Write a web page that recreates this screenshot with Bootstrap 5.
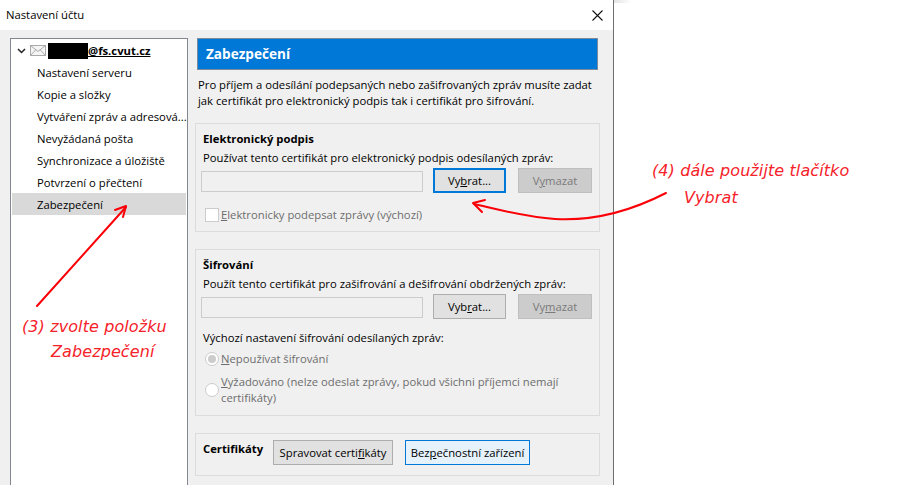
<!DOCTYPE html>
<html lang="cs"><head><meta charset="utf-8"><title>Nastavení účtu</title>
<link href="https://cdn.jsdelivr.net/npm/bootstrap@5.3.0/dist/css/bootstrap.min.css" rel="stylesheet">
<style>
html,body{height:485px;overflow:hidden;background:#fff}
body{font-family:"Open Sans","Noto Sans",sans-serif;font-size:11.27px;line-height:16px;color:#000;position:relative}
.win{width:614px;height:485px;border-right:1px solid #6f6f6f}
.tbar{height:30px;padding-left:6px;padding-right:10px}
.closex{width:11px;height:11px}
.wbody{background:#f0f0f0;flex:1;padding:8px 0 0 10px;min-height:0}
.tree{width:178px;flex:none;background:#fff;border:1px solid #828790;border-bottom:0;padding:1px;}
.acct{height:21px;padding-left:5px;margin-bottom:0}
.redact{width:40px;height:16px;background:#000;margin-left:2px}
.addr{font-weight:700;text-decoration:underline;font-size:11.3px}
.titem{height:22px;padding-left:25px;padding-top:2px;white-space:nowrap}
.titem.sel{background:#d9d9d9}
.main{margin-left:7px;width:405px;flex:none;min-width:0}
.hdr{margin:0 2px;height:32px;background:#0078d7;border:1px solid #7c8a99;color:#fff;font-weight:700;font-size:13.6px;padding-left:8px}
.intro{margin:7px 3px 0 3px;height:46px}
.grp{border:1px solid #dcdcdc;padding:7px 7px 0 7px;margin-bottom:17px}
.g1{height:109px}.g2{height:167px}.g3{height:43px;padding:6px 7px 0 7px;margin-bottom:0}
.gt{font-weight:700;height:16px;margin-bottom:3px}
.gt3{width:57px;padding-top:1px}
.fldrow{margin-top:2px;margin-left:-2px;height:25px}
.fld{width:222px;height:21px;background:#f0f0f0;border:1px solid #ccc;flex:none;margin-top:3px}
.wbtn{--bs-btn-padding-x:0;--bs-btn-padding-y:0;--bs-btn-font-size:11.27px;--bs-btn-line-height:1;--bs-btn-border-radius:0;height:25px;flex:none;background:#e1e1e1;border:1px solid #adadad;color:#000;font-family:inherit;opacity:1}
.b1{width:73px;margin-left:10px}
.b2{width:74px;margin-left:12px}
.b1.foc{border:2px solid #0078d7}
.b2{background:#ccc;border-color:#bfbfbf;color:#7a7a7a}
.bmgr{width:120px;margin-left:13px}
.bsec{width:125px;margin-left:12px;background:#e5f1fb;border-color:#0078d7}
.off{color:#6d6d6d}
.ck{width:14px;height:14px;background:#fff;border:1px solid #ccc;flex:none;margin-right:2px}
.rd{width:14px;height:14px;background:#fff;border:1px solid #ccc;border-radius:50%;flex:none;margin-right:2px}
.rd.on{background:#fff;position:relative}
.rd.on::after{content:"";position:absolute;left:2px;top:2px;width:8px;height:8px;border-radius:50%;background:#ccc}
.ckrow{margin-top:14px;margin-left:2px;height:16px}
.sub{margin-top:11px;height:16px}
.rrow{margin-top:5px;margin-left:2px;height:16px}
.rrow2{margin-top:7px;margin-left:2px}
.ann{position:absolute;color:#f5222a;font-family:"DejaVu Sans",sans-serif;font-style:italic;font-size:16px;line-height:20px;white-space:nowrap;letter-spacing:.1px}
.a4a{left:652px;top:161px}.a4b{left:684px;top:188px}.a3a{left:22px;top:317px}.a3b{left:51px;top:342px}
.over{position:absolute;left:0;top:0;width:900px;height:485px;pointer-events:none}
.shade{position:absolute;left:614px;top:0;width:18px;height:3px;background:linear-gradient(90deg,#e4e4e4,#fff)}
</style></head><body>
<div class="win d-flex flex-column">
  <div class="tbar d-flex align-items-center justify-content-between"><span>Nastavení účtu</span>
    <svg class="closex" viewBox="0 0 11 11"><path d="M.5.5l10 10M10.5.5l-10 10" stroke="#111" stroke-width="1.1" fill="none"/></svg></div>
  <div class="wbody d-flex">
    <div class="tree">
      <div class="acct d-flex align-items-center">
        <svg width="9" height="6" viewBox="0 0 9 6"><path d="M1 1l3.5 3.5L8 1" stroke="#222" stroke-width="1.5" fill="none"/></svg>
        <svg class="ms-1" width="16" height="11" viewBox="0 0 16 11"><rect x=".5" y=".5" width="15" height="10" fill="#f5f5f5" stroke="#aaa"/><path d="M.5.5l7.5 6 7.5-6M.5 10.5l5.5-6M15.5 10.5l-5.5-6" stroke="#aaa" fill="none"/></svg>
        <span class="redact"></span><span class="addr">@fs.cvut.cz</span>
      </div>
      <div class="titem d-flex align-items-center">Nastavení serveru</div>
      <div class="titem d-flex align-items-center">Kopie a složky</div>
      <div class="titem d-flex align-items-center">Vytváření zpráv a adresová...</div>
      <div class="titem d-flex align-items-center">Nevyžádaná pošta</div>
      <div class="titem d-flex align-items-center">Synchronizace a úložiště</div>
      <div class="titem d-flex align-items-center">Potvrzení o přečtení</div>
      <div class="titem sel d-flex align-items-center">Zabezpečení</div>
    </div>
    <div class="main">
      <div class="hdr d-flex align-items-center">Zabezpečení</div>
      <div class="intro">Pro příjem a odesílání podepsaných nebo zašifrovaných zpráv musíte zadat<br>jak certifikát pro elektronický podpis tak i certifikát pro šifrování.</div>
      <div class="grp g1">
        <div class="gt">Elektronický podpis</div>
        <div>Používat tento certifikát pro elektronický podpis odesílaných zpráv:</div>
        <div class="fldrow d-flex"><div class="fld"></div><button class="btn wbtn b1 foc">Vy<u>b</u>rat...</button><button class="btn wbtn b2">V<u>y</u>mazat</button></div>
        <div class="ckrow d-flex align-items-center off"><span class="ck"></span><span><u>E</u>lektronicky podepsat zprávy (výchozí)</span></div>
      </div>
      <div class="grp g2">
        <div class="gt">Šifrování</div>
        <div>Použít tento certifikát pro zašifrování a dešifrování obdržených zpráv:</div>
        <div class="fldrow d-flex"><div class="fld"></div><button class="btn wbtn b1">Vyb<u>r</u>at...</button><button class="btn wbtn b2">Vy<u>m</u>azat</button></div>
        <div class="sub">Výchozí nastavení šifrování odesílaných zpráv:</div>
        <div class="rrow d-flex align-items-center off"><span class="rd on"></span><span><u>N</u>epoužívat šifrování</span></div>
        <div class="rrow2 d-flex align-items-center off"><span class="rd"></span><span><u>V</u>yžadováno (nelze odeslat zprávy, pokud všichni příjemci nemají<br>certifikáty)</span></div>
      </div>
      <div class="grp g3 d-flex">
        <div class="gt gt3">Certifikáty</div>
        <button class="btn wbtn bmgr">Spravovat certi<u>f</u>ikáty</button><button class="btn wbtn bsec">Bez<u>p</u>ečnostní zařízení</button>
      </div>
    </div>
  </div>
</div>
<div class="shade"></div>
<svg class="over" viewBox="0 0 900 485" fill="none" stroke="#fb0007" stroke-linecap="round" stroke-linejoin="round">
  <path d="M37 306L126 207" stroke-width="2"/><path d="M115 210L126 206L123 217" stroke-width="2"/>
  <path d="M666 193C625 214 590 221 555 219C525 217 500 210 474 204" stroke-width="2"/><path d="M485 200L473 203L482 212" stroke-width="2"/>
</svg>
<div class="ann a4a">(4) dále použijte tlačítko</div>
<div class="ann a4b">Vybrat</div>
<div class="ann a3a">(3) zvolte položku</div>
<div class="ann a3b">Zabezpečení</div>
</body></html>
